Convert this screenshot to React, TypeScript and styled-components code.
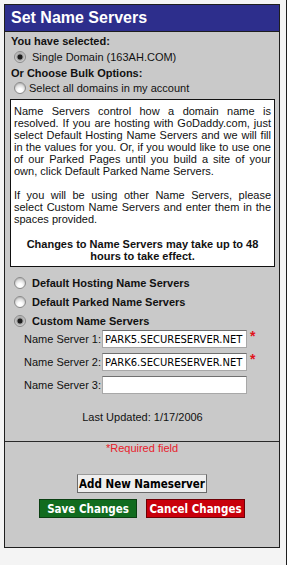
import React from 'react';
import styled, { createGlobalStyle } from 'styled-components';

const GlobalStyle = createGlobalStyle`
    html, body {
        margin: 0;
        padding: 0;
        background: #ffffff;
    }
`;

const Frame = styled.div`
    width: 287px;
    height: 565px;
    box-sizing: border-box;
    padding: 4px 0 0 4px;
    background: #f4f4f4;
    border-right: 1px solid #1e1e1e;
    font-family: 'Liberation Sans', Arial, sans-serif;
    color: #111;
`;

const Panel = styled.div`
    width: 276px;
    box-sizing: border-box;
    border: 1px solid #1e1e1e;
    background: #c9c9c9;
`;

const Header = styled.div`
    height: 26px;
    display: flex;
    align-items: center;
    padding-left: 6px;
    background: #2d2e8c;
    border-bottom: 1px solid #1e1e1e;
    color: #fff;
    font-size: 16px;
    font-weight: bold;
`;

const Body = styled.div`
    padding: 2px 4px 17px 5px;
    font-size: 11px;
`;

const SectionLabel = styled.div`
    font-weight: bold;
    line-height: 14px;
    padding-left: 1px;
`;

const RadioRow = styled.label<{ $height?: number; $gap?: number; $bold?: boolean }>`
    display: flex;
    align-items: center;
    height: ${({ $height }) => $height ?? 16}px;
    padding-left: 4px;
    gap: ${({ $gap }) => $gap ?? 6}px;
    font-weight: ${({ $bold }) => ($bold ? 'bold' : 'normal')};
`;

const Radio = styled.span<{ $checked?: boolean }>`
    width: 12px;
    height: 12px;
    flex: none;
    box-sizing: border-box;
    border-radius: 50%;
    border: 1px solid #8a8a8a;
    box-shadow: inset 0 1px 1px rgba(0, 0, 0, 0.15);
    background: ${({ $checked }) =>
        $checked
            ? 'radial-gradient(circle at 50% 50%, #1c1c1c 0 2.1px, #8f8f8f 2.8px, #c4c4c4 4px, #e6e6e6 6px)'
            : 'radial-gradient(circle at 50% 75%, #ffffff 0 2px, #f0f0f0 3.5px, #d6d6d6 6px)'};
`;

const InfoBox = styled.div`
    margin-top: 3px;
    background: #fff;
    border: 1px solid #111;
    padding: 5px 3px 4px 3px;
    line-height: 12px;
    text-align: justify;

    p {
        margin: 0 0 12px;
    }
`;

const Notice = styled.div`
    font-weight: bold;
    text-align: center;
    margin-top: 13px;
`;

const RadioList = styled.div`
    margin-top: 6px;
`;

const ServerGrid = styled.div`
    display: flex;
    flex-direction: column;
    gap: 5px;
    padding-left: 14px;
`;

const ServerRow = styled.div`
    display: flex;
    align-items: center;
`;

const ServerLabel = styled.span`
    width: 78px;
    white-space: nowrap;
`;

const ServerInput = styled.div`
    width: 145px;
    height: 18px;
    box-sizing: border-box;
    background: #fff;
    border: 1px solid #a8a8a8;
    border-top-color: #707070;
    padding: 0 2px;
    display: flex;
    align-items: center;
    font-family: 'DejaVu Sans', sans-serif;
    font-size: 10px;
    white-space: nowrap;
    overflow: hidden;
    color: #000;
`;

const Asterisk = styled.span`
    align-self: flex-start;
    margin-left: 3px;
    color: #e0141c;
    font-size: 14px;
    font-weight: bold;
    line-height: 12px;
`;

const Updated = styled.div`
    margin-top: 17px;
    text-align: center;
    line-height: 13px;
`;

const Footer = styled.div`
    border-top: 1px solid #2a2a2a;
    padding-bottom: 29px;
    display: flex;
    flex-direction: column;
    align-items: center;
`;

const Required = styled.div`
    color: #e8202a;
    font-size: 11px;
    line-height: 13px;
`;

const ButtonRow = styled.div`
    display: flex;
    gap: 9px;
    margin-top: 6px;
`;

type Tone = 'plain' | 'save' | 'cancel';

const tones: Record<Tone, { bg: string; border: string; color: string }> = {
    plain: { bg: '#efefef', border: '#6a6a6a', color: '#000' },
    save: { bg: '#116c1f', border: '#0a3f12', color: '#fff' },
    cancel: { bg: '#c9000b', border: '#6e0005', color: '#fff' },
};

const Button = styled.button<{ $tone: Tone; $width: number }>`
    width: ${({ $width }) => $width}px;
    height: 19px;
    padding: 0;
    box-sizing: border-box;
    background: ${({ $tone }) => tones[$tone].bg};
    color: ${({ $tone }) => tones[$tone].color};
    border: 1px solid ${({ $tone }) => tones[$tone].border};
    border-top-color: ${({ $tone }) => ($tone === 'plain' ? '#9a9a9a' : tones[$tone].border)};
    font-family: 'DejaVu Sans Condensed', 'DejaVu Sans', sans-serif;
    font-stretch: condensed;
    font-weight: bold;
    font-size: 11.5px;
    cursor: pointer;
`;

const AddButton = styled(Button)`
    margin-top: 19px;
`;

const servers = [
    { label: 'Name Server 1:', value: 'PARK5.SECURESERVER.NET', required: true },
    { label: 'Name Server 2:', value: 'PARK6.SECURESERVER.NET', required: true },
    { label: 'Name Server 3:', value: '', required: false },
];

export default function App() {
    return (
        <>
            <GlobalStyle />
            <Frame>
                <Panel>
                    <Header>Set Name Servers</Header>
                    <Body>
                        <SectionLabel>You have selected:</SectionLabel>
                        <RadioRow $height={18}>
                            <Radio $checked />
                            Single Domain (163AH.COM)
                        </RadioRow>
                        <SectionLabel>Or Choose Bulk Options:</SectionLabel>
                        <RadioRow $gap={3}>
                            <Radio />
                            Select all domains in my account
                        </RadioRow>

                        <InfoBox>
                            <p>
                                Name Servers control how a domain name is resolved. If you are hosting with
                                GoDaddy.com, just select Default Hosting Name Servers and we will fill in the values
                                for you. Or, if you would like to use one of our Parked Pages until you build a site of
                                your own, click Default Parked Name Servers.
                            </p>
                            <p>
                                If you will be using other Name Servers, please select Custom Name Servers and enter
                                them in the spaces provided.
                            </p>
                            <Notice>Changes to Name Servers may take up to 48 hours to take effect.</Notice>
                        </InfoBox>

                        <RadioList>
                            <RadioRow $height={19} $bold>
                                <Radio />
                                Default Hosting Name Servers
                            </RadioRow>
                            <RadioRow $height={19} $bold>
                                <Radio />
                                Default Parked Name Servers
                            </RadioRow>
                            <RadioRow $height={19} $bold>
                                <Radio $checked />
                                Custom Name Servers
                            </RadioRow>
                        </RadioList>

                        <ServerGrid>
                            {servers.map((s) => (
                                <ServerRow key={s.label}>
                                    <ServerLabel>{s.label}</ServerLabel>
                                    <ServerInput>{s.value}</ServerInput>
                                    {s.required ? <Asterisk>*</Asterisk> : null}
                                </ServerRow>
                            ))}
                        </ServerGrid>

                        <Updated>Last Updated: 1/17/2006</Updated>
                    </Body>
                    <Footer>
                        <Required>*Required field</Required>
                        <AddButton $tone="plain" $width={130}>
                            Add New Nameserver
                        </AddButton>
                        <ButtonRow>
                            <Button $tone="save" $width={98}>
                                Save Changes
                            </Button>
                            <Button $tone="cancel" $width={99}>
                                Cancel Changes
                            </Button>
                        </ButtonRow>
                    </Footer>
                </Panel>
            </Frame>
        </>
    );
}
